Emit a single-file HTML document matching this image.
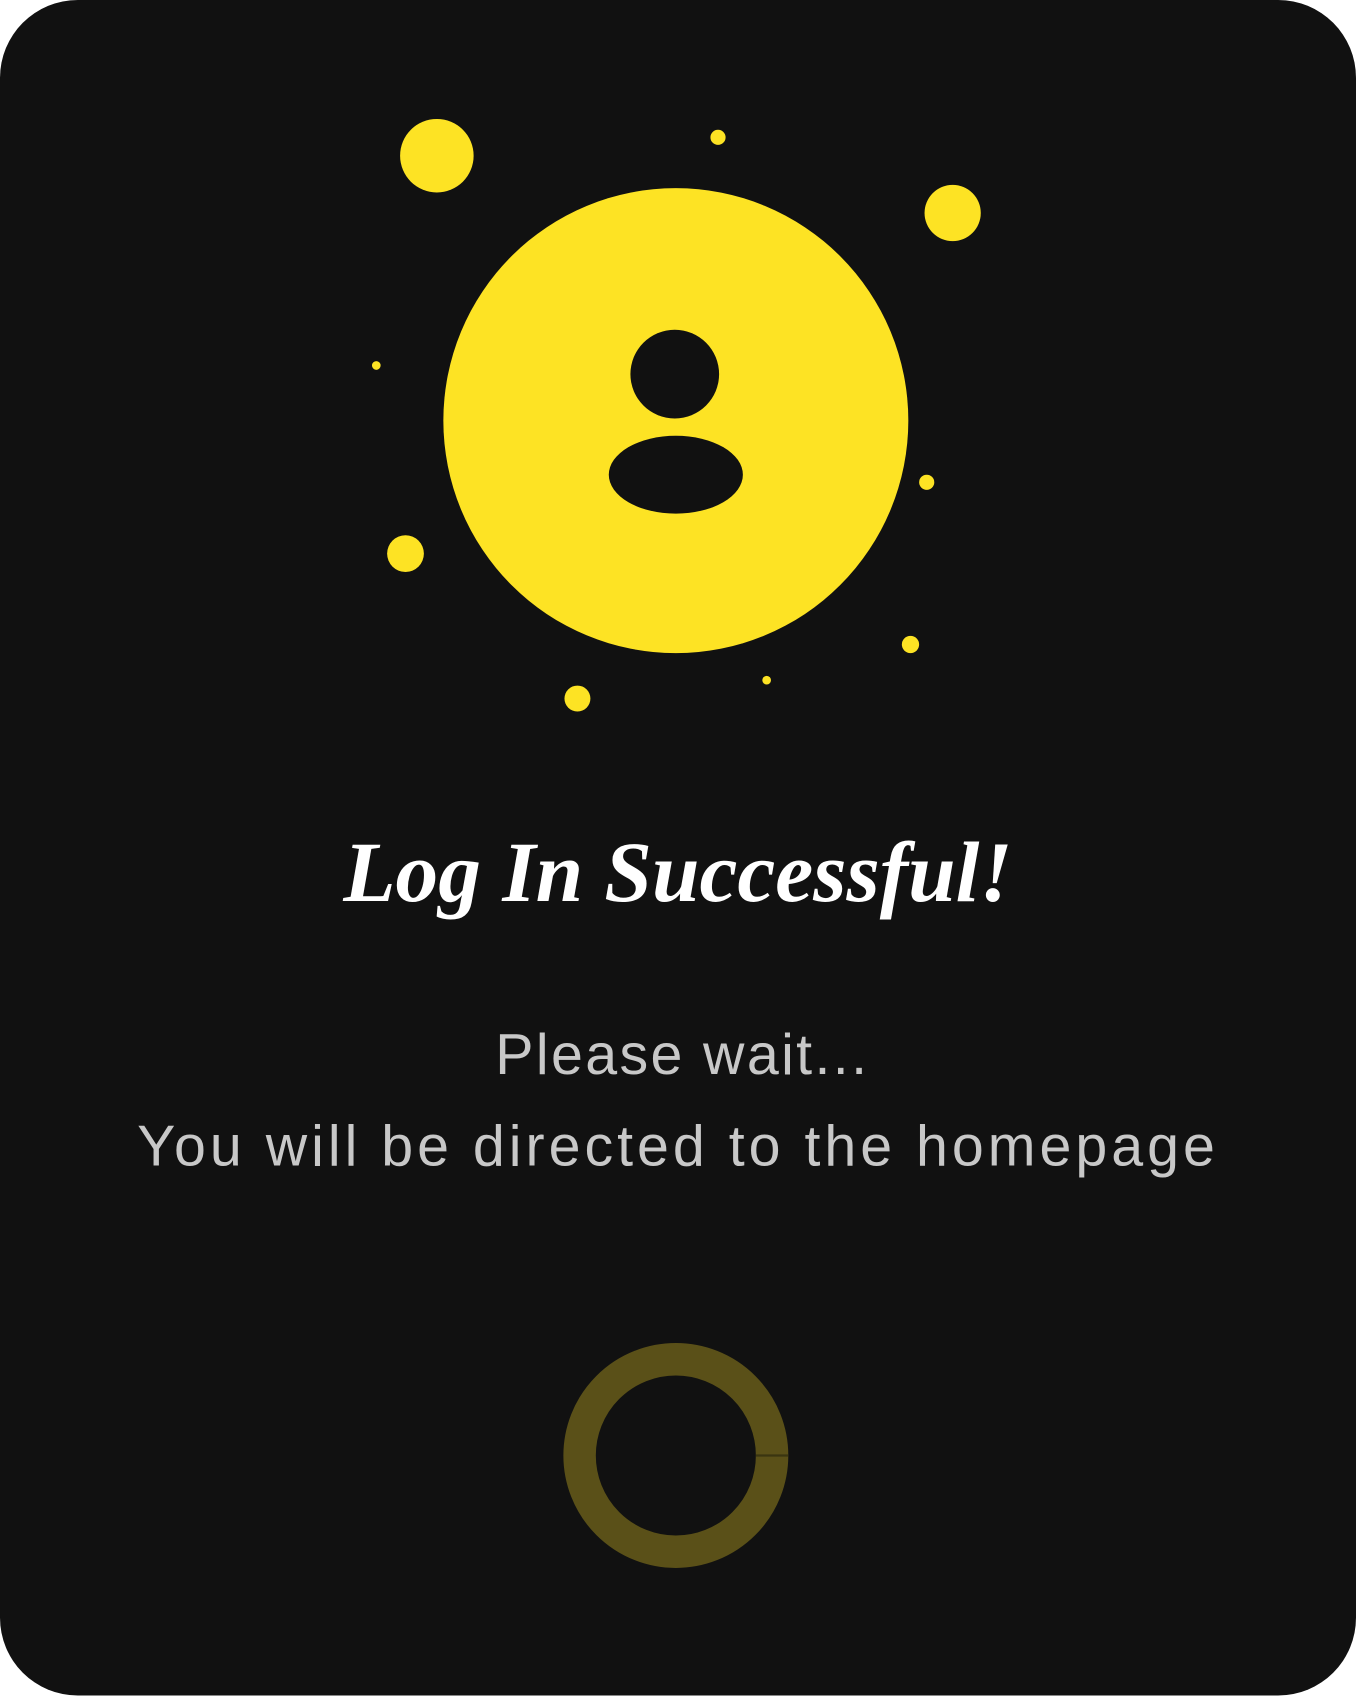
<!DOCTYPE html>
<html><head><meta charset="utf-8"><style>
html,body{margin:0;padding:0;background:#fff;width:1356px;height:1696px;overflow:hidden}
#w{position:absolute;left:0;top:0;width:1254px;height:1568px;transform:scale(1.08134);transform-origin:0 0}
.card{position:absolute;left:0;top:0;width:1254px;height:1568px;background:#111;border-radius:72px}
.t{position:absolute;left:0;width:1254px;text-align:center;white-space:nowrap}
</style></head><body><div id="w"><div class="card"></div>
<svg style="position:absolute;left:0;top:0" width="1254" height="1568">
<g fill="#fde324">
<circle cx="625" cy="389" r="215"/>
<circle cx="404" cy="144" r="34"/><circle cx="664" cy="127" r="7"/><circle cx="881" cy="197" r="26"/>
<circle cx="348" cy="338" r="4"/><circle cx="857" cy="446" r="7"/><circle cx="375" cy="512" r="17"/>
<circle cx="842" cy="596" r="8"/><circle cx="709" cy="629" r="4"/><circle cx="534" cy="646" r="12"/>
</g>
<circle cx="624" cy="346" r="41" fill="#111"/>
<ellipse cx="625" cy="439" rx="62" ry="36" fill="#111"/>
<circle cx="625" cy="1346" r="89" fill="none" stroke="#5a5018" stroke-width="30"/>
<line x1="699" y1="1346" x2="729" y2="1346" stroke="#3a3510" stroke-width="2"/>
</svg>
<div class="t" style="top:763px;font:italic bold 79px 'Liberation Serif',serif;color:#fff">Log In Successful!</div>
<div class="t" style="top:945px;font:53px 'Liberation Sans',sans-serif;letter-spacing:2.2px;color:#c8c8c8;padding-left:8px;box-sizing:border-box">Please wait...</div>
<div class="t" style="top:1030px;font:53px 'Liberation Sans',sans-serif;letter-spacing:3.7px;color:#c8c8c8">You will be directed to the homepage</div>
</div></body></html>
